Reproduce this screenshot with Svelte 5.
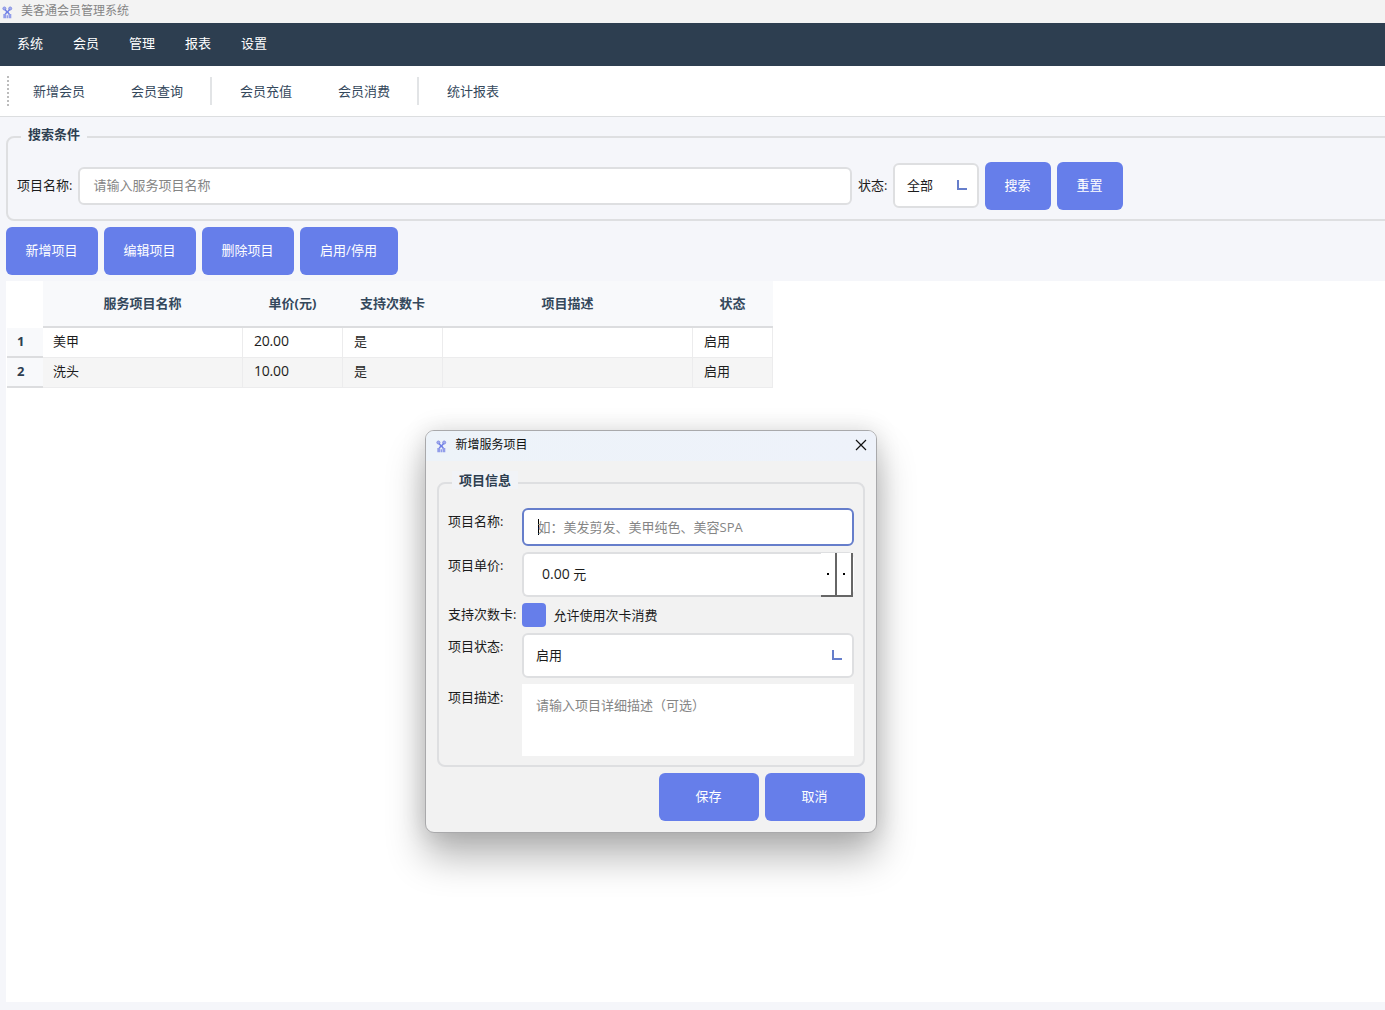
<script>
  const menus = ['系统', '会员', '管理', '报表', '设置'];
  const toolGroups = [['新增会员', '会员查询'], ['会员充值', '会员消费'], ['统计报表']];
  const actions = ['新增项目', '编辑项目', '删除项目', '启用/停用'];
  const columns = ['服务项目名称', '单价(元)', '支持次数卡', '项目描述', '状态'];
  const rows = [
    ['美甲', '20.00', '是', '', '启用'],
    ['洗头', '10.00', '是', '', '启用']
  ];
</script>

{#snippet logo()}
  <svg class="logo" width="12" height="13" viewBox="0 0 12 13">
    <g fill="#a3acee" stroke="#8490e4" stroke-width="1">
      <circle cx="2.4" cy="2.5" r="1.5" />
      <circle cx="8.2" cy="2.5" r="1.5" />
    </g>
    <path d="M3 3.5L5.3 6.2L7.6 3.5M5.3 5.5L3 8.6M5.3 5.5L7.6 8.6" fill="none" stroke="#6f7fe6" stroke-width="1.5" />
    <path d="M1.3 8h2.8v4.2h-2.8z M4.6 9.2h1.4v3h-1.4z M6.5 8h2.8v4.2h-2.8z" fill="#929dea" />
  </svg>
{/snippet}

{#snippet corner()}
  <svg width="10" height="10" viewBox="0 0 10 10"><path d="M1 0V9H10" fill="none" stroke="#667ecb" stroke-width="2" /></svg>
{/snippet}

<div class="window">
  <header class="titlebar">{@render logo()}<span>美客通会员管理系统</span></header>
  <nav class="menubar">
    {#each menus as m}<span>{m}</span>{/each}
  </nav>
  <div class="toolbar">
    <i class="grip"></i>
    {#each toolGroups as group, i}
      {#if i > 0}<i class="sep"></i>{/if}
      {#each group as t}<span class="tool">{t}</span>{/each}
    {/each}
  </div>

  <main>
    <section class="group search">
      <h2 class="legend">搜索条件</h2>
      <span class="lbl name">项目名称:</span>
      <div class="field query">请输入服务项目名称</div>
      <span class="lbl state">状态:</span>
      <div class="field select filter"><span>全部</span>{@render corner()}</div>
      <button class="small">搜索</button>
      <button class="small">重置</button>
    </section>

    <div class="actions">
      {#each actions as a, i}<button class:wide={i === 3}>{a}</button>{/each}
    </div>

    <div class="sheet">
      <div class="grid head">
        <div class="blank"></div>
        {#each columns as c}<div class="th">{c}</div>{/each}
      </div>
      {#each rows as r, i}
        <div class="grid row" class:alt={i % 2 === 1}>
          <div class="rowno">{i + 1}</div>
          {#each r as cell, j}<div class="td" class:num={j === 1} class:late={j > 1}>{cell}</div>{/each}
        </div>
      {/each}
    </div>
  </main>

  <div class="dialog">
    <div class="dlgtitle">
      {@render logo()}<span>新增服务项目</span>
      <svg class="close" width="12" height="12" viewBox="0 0 12 12"><path d="M1 1L11 11M11 1L1 11" stroke="#111" stroke-width="1.2" /></svg>
    </div>
    <section class="group form">
      <h2 class="legend">项目信息</h2>
      <span class="lbl">项目名称:</span>
      <div class="field focus"><i class="caret"></i>如：美发剪发、美甲纯色、美容SPA</div>
      <span class="lbl">项目单价:</span>
      <div class="field spin">
        <span class="amount">0.00 <b>元</b></span>
        <i class="step"></i><i class="step"></i>
      </div>
      <span class="lbl short">支持次数卡:</span>
      <div class="check"><i></i>允许使用次卡消费</div>
      <span class="lbl">项目状态:</span>
      <div class="field select"><span>启用</span>{@render corner()}</div>
      <span class="lbl">项目描述:</span>
      <div class="area">请输入项目详细描述（可选）</div>
    </section>
    <div class="buttons"><button>保存</button><button>取消</button></div>
  </div>
</div>

<style>
  :global(body) { margin: 0; overflow: hidden; }
  * { box-sizing: border-box; }
  .window {
    position: relative;
    width: 1385px;
    height: 1010px;
    overflow: hidden;
    display: flex;
    flex-direction: column;
    background: #f5f6fa;
    color: #1c1c1c;
    font: 13px/18px "Open Sans", "Noto Sans CJK SC", sans-serif;
    white-space: nowrap;
  }
  svg { display: block; flex: none; }
  .titlebar {
    height: 23px;
    flex: none;
    display: flex;
    align-items: center;
    gap: 7px;
    padding: 0 0 1px 2px;
    background: #f3f3f3;
    color: #858585;
    font-size: 12px;
  }
  .titlebar .logo { margin-top: 2px; }
  .menubar {
    height: 43px;
    flex: none;
    display: flex;
    align-items: center;
    gap: 30px;
    padding: 0 17px 3px;
    background: #2d3e50;
    color: #fff;
  }
  .menubar span { width: 26px; }
  .toolbar {
    height: 51px;
    flex: none;
    display: flex;
    align-items: center;
    padding-left: 7px;
    background: #fff;
    border-bottom: 1px solid #dcdee0;
    color: #34485c;
  }
  .grip {
    width: 2px;
    height: 31px;
    margin-right: 2px;
    background: repeating-linear-gradient(#bcbcbc 0 2px, #fff 2px 4px);
  }
  .tool { width: 98px; padding-left: 22px; }
  .sep { width: 2px; height: 28px; margin: 0 6px 0 3px; background: #e2e4e6; }
  main { flex: 1; display: flex; flex-direction: column; padding: 19px 0 8px 6px; }
  .group { position: relative; border: 2px solid #dedfe1; border-radius: 8px; }
  .legend {
    position: absolute;
    top: -13px;
    left: 13px;
    margin: 0;
    padding: 0 7px;
    font-size: 13px;
    line-height: 18px;
    font-weight: 700;
    color: #2d3e50;
    background: #f5f6fa;
  }
  .search {
    width: 1500px;
    height: 85px;
    display: flex;
    align-items: center;
    gap: 6px;
    padding: 15px 0 0 9px;
  }
  .search .lbl { padding-bottom: 2px; }
  .name { width: 55px; }
  .state { width: 29px; }
  .field {
    display: flex;
    align-items: center;
    height: 38px;
    padding: 0 14px 1px 13.5px;
    border: 2px solid #dedfe1;
    border-radius: 6px;
    background: #fff;
    color: #858585;
  }
  .query { width: 774px; padding-bottom: 2px; }
  .select { height: 45px; padding: 0 10px 1px 12px; justify-content: space-between; color: #1c1c1c; }
  .select span { padding-bottom: 1px; }
  .filter { width: 86px; margin-bottom: 2px; padding-bottom: 0; }
  button {
    width: 92px;
    height: 48px;
    padding: 0 1px 2px 0;
    border: 0;
    border-radius: 6px;
    background: #667eea;
    color: #fff;
    font: inherit;
  }
  button.small { width: 66px; }
  button.wide { width: 98px; }
  .actions { display: flex; gap: 6px; margin: 6px 0; }
  .sheet { flex: 1; background: #fff; }
  .grid { display: grid; grid-template-columns: 37px 200px 100px 100px 250px 80px; width: 767px; }
  .th {
    height: 47px;
    display: flex;
    align-items: center;
    justify-content: center;
    padding: 0 1px 1px 0;
    background: #f8f9fb;
    border-bottom: 2px solid #dcdddf;
    color: #34485c;
    font-weight: 700;
  }
  .row { height: 30px; }
  .rowno {
    margin-left: 1px;
    padding: 4px 0 0 10px;
    background: #f8f9fb;
    border-bottom: 2px solid #dcdddf;
    color: #2d3e50;
    font-weight: 700;
  }
  .td {
    padding: 4px 0 0 10px;
    border-right: 1px solid #ececed;
    border-bottom: 1px solid #ececed;
  }
  .alt .td { background: #f5f5f5; }
  .num { padding-left: 11px; font-size: 14px; letter-spacing: -0.2px; }
  .late { padding-left: 11px; }
  .dialog {
    position: absolute;
    left: 425px;
    top: 430px;
    width: 452px;
    height: 403px;
    padding: 0 11px;
    border: 1px solid #a9a9ab;
    border-radius: 9px;
    background: #f2f2f2;
    box-shadow: 0 24px 38px rgba(0, 0, 0, 0.29), 0 0 24px rgba(0, 0, 0, 0.13);
  }
  .dlgtitle {
    display: flex;
    align-items: center;
    height: 30px;
    margin: 0 -11px;
    padding: 0 9px 2px 10px;
    border-radius: 8px 8px 0 0;
    background: linear-gradient(90deg, #edf3f9, #eef2fa);
    color: #111;
    font-size: 12px;
  }
  .dlgtitle .logo { margin: 3px 7.5px 0 0; }
  .close { margin-left: auto; }
  .form {
    height: 285px;
    margin-top: 21px;
    padding: 24px 9px 0;
    display: grid;
    grid-template-columns: 68px 332px;
    grid-template-rows: 38px 45px 24px 45px 72px;
    gap: 6px;
  }
  .form .legend { background: #f1f3f7; }
  .form .lbl { line-height: 26px; }
  .form .short { line-height: 23px; }
  .focus { border-color: #667ecb; }
  .caret { width: 1px; height: 16px; margin-right: -1px; background: #000; }
  .spin { height: 45px; padding: 0 1px 0 0; border-right: 0; align-items: stretch; }
  .amount { flex: 1; padding-left: 18px; font-size: 14px; line-height: 40px; color: #1c1c1c; }
  .amount b { font-weight: 400; font-size: 13px; }
  .step {
    width: 16px;
    margin: -1px 0 -2px;
    display: flex;
    align-items: center;
    justify-content: center;
    border-right: 2px solid #666;
    border-bottom: 2px solid #666;
    background: #fff;
  }
  .step::before { content: ""; width: 2px; height: 2px; background: #000; }
  .check { display: flex; align-items: center; gap: 7.5px; line-height: 23px; }
  .check i { width: 24px; height: 24px; border-radius: 4px; background: #667eea; }
  .area { padding: 12px 14px; background: #fff; color: #858585; }
  .buttons { display: flex; justify-content: flex-end; gap: 6px; margin-top: 6px; }
  .buttons button { width: 100px; }
</style>
